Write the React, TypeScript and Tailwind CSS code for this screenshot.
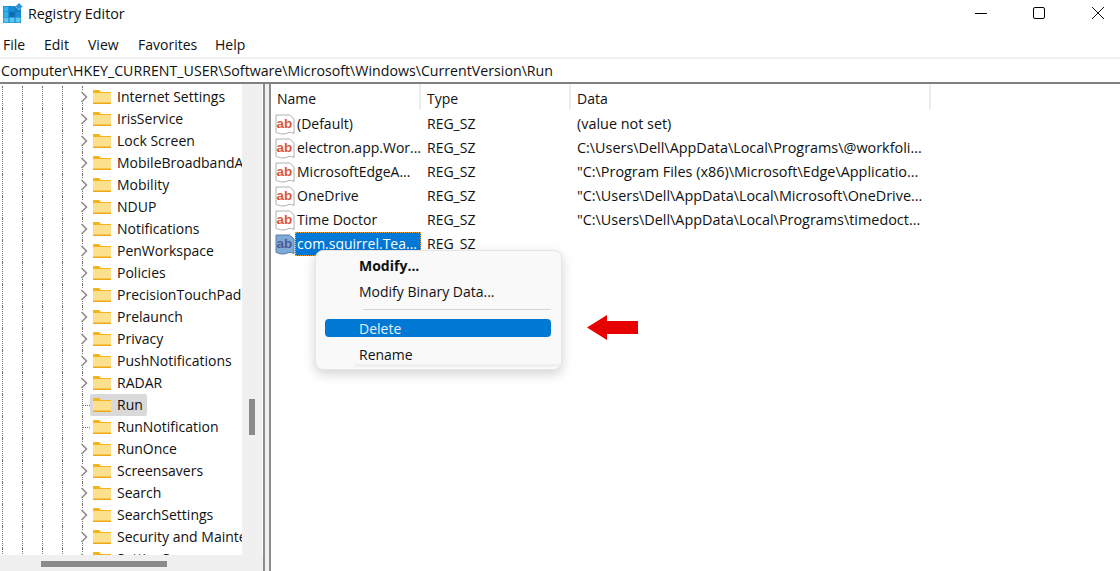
import React from 'react';

const treeItems = [
  { name: 'Internet Settings', arrow: true },
  { name: 'IrisService', arrow: true },
  { name: 'Lock Screen', arrow: true },
  { name: 'MobileBroadbandAccounts', arrow: true },
  { name: 'Mobility', arrow: true },
  { name: 'NDUP', arrow: true },
  { name: 'Notifications', arrow: true },
  { name: 'PenWorkspace', arrow: true },
  { name: 'Policies', arrow: true },
  { name: 'PrecisionTouchPad', arrow: true },
  { name: 'Prelaunch', arrow: true },
  { name: 'Privacy', arrow: true },
  { name: 'PushNotifications', arrow: true },
  { name: 'RADAR', arrow: true },
  { name: 'Run', arrow: false, selected: true },
  { name: 'RunNotification', arrow: false },
  { name: 'RunOnce', arrow: true },
  { name: 'Screensavers', arrow: true },
  { name: 'Search', arrow: true },
  { name: 'SearchSettings', arrow: true },
  { name: 'Security and Maintenance', arrow: true },
  { name: 'SettingSync', arrow: true },
];

const values = [
  { name: '(Default)', data: '(value not set)' },
  { name: 'electron.app.Wor...', data: 'C:\\Users\\Dell\\AppData\\Local\\Programs\\@workfoli...' },
  { name: 'MicrosoftEdgeA...', data: '"C:\\Program Files (x86)\\Microsoft\\Edge\\Applicatio...' },
  { name: 'OneDrive', data: '"C:\\Users\\Dell\\AppData\\Local\\Microsoft\\OneDrive...' },
  { name: 'Time Doctor', data: '"C:\\Users\\Dell\\AppData\\Local\\Programs\\timedoct...' },
  { name: 'com.squirrel.Tea...', data: '', selected: true },
];

function AppIcon() {
  return (
    <svg width="24" height="24" viewBox="0 0 24 24" className="shrink-0">
      <rect x="3" y="6" width="18" height="17" fill="#0f7fc4" />
      <rect x="3.5" y="6.5" width="5" height="5" fill="#35b0ee" />
      <rect x="9.5" y="6.5" width="5" height="5" fill="#1a8dd6" />
      <rect x="3.5" y="12" width="5" height="5" fill="#35b0ee" />
      <rect x="9.5" y="12" width="5" height="5" fill="#0f6cb0" />
      <rect x="15.5" y="12" width="5" height="5" fill="#1a8dd6" />
      <rect x="3.5" y="17.5" width="5" height="5" fill="#5cc6f5" />
      <rect x="9.5" y="17.5" width="5" height="5" fill="#5cc6f5" />
      <rect x="15.5" y="17.5" width="5" height="5" fill="#5cc6f5" />
      <path d="M19 3l3.5 3.5L19 10l-3.5-3.5z" fill="#2b93d6" stroke="#8fcdf0" strokeWidth="0.8" />
    </svg>
  );
}

function Folder() {
  return (
    <svg width="18" height="14" viewBox="0 0 18 14" className="shrink-0">
      <rect x="0" y="2" width="18" height="12" fill="#fbd56f" />
      <rect x="0" y="3" width="18" height="10" fill="#fde08e" />
      <rect x="0" y="12.5" width="18" height="1.5" fill="#eea818" />
      <path d="M0 1a1 1 0 0 1 1-1h5l2 2h10v1H0z" fill="#f5b21b" />
    </svg>
  );
}

function AbIcon({ selected }: { selected?: boolean }) {
  return (
    <svg width="20" height="21" viewBox="0 0 20 21" className="shrink-0">
      <path
        d="M1 1h13.5l4.5 4v14.5c-3-1.6-5-1.2-8 0s-7 0.4-10-1.2z"
        fill={selected ? '#7fa9d6' : '#ffffff'}
        stroke={selected ? '#5a7ea8' : '#b0b0b0'}
        strokeWidth="1"
      />
      <text
        x="9.5"
        y="13.5"
        textAnchor="middle"
        fontFamily='"Liberation Sans", sans-serif'
        fontWeight="700"
        fontSize="13.5"
        fill={selected ? '#4d5c96' : '#e0563a'}
      >
        ab
      </text>
    </svg>
  );
}

function TreeRow({ name, arrow, selected }: { name: string; arrow: boolean; selected?: boolean }) {
  return (
    <div className="flex h-[22px] shrink-0 items-center">
      <div className="h-full w-5 shrink-0 border-l border-dotted border-[#707070]" />
      <div className="h-full w-5 shrink-0 border-l border-dotted border-[#707070]" />
      <div className="h-full w-5 shrink-0 border-l border-dotted border-[#707070]" />
      <div className="h-full w-5 shrink-0 border-l border-dotted border-[#707070]" />
      <div className="flex h-full w-2 shrink-0 items-center justify-start border-l border-dotted border-[#707070]">
        {arrow ? (
          <svg width="8" height="12" viewBox="0 0 8 12" className="-ml-[3px] shrink-0 bg-white">
            <path d="M1.5 1l5 5-5 5" fill="none" stroke="#8a8a8a" strokeWidth="1.5" />
          </svg>
        ) : (
          <div className="w-2 border-t border-dotted border-[#707070]" />
        )}
      </div>
      <div className={`flex h-full shrink-0 items-center gap-[6px] whitespace-nowrap rounded-[2px] pr-[4px] pl-[3px] ${selected ? 'bg-[#d9d9d9]' : ''}`}>
        <Folder />
        <span>{name}</span>
      </div>
    </div>
  );
}

function ValueRow({ name, data, selected }: { name: string; data: string; selected?: boolean }) {
  return (
    <div className="flex h-6 items-center whitespace-nowrap">
      <div className="flex h-full w-[150px] shrink-0 items-center pl-[4px]">
        <AbIcon selected={selected} />
        <span className={`flex h-full w-[126px] shrink-0 items-center pl-[2px] ${selected ? 'border border-dotted border-[#e8a33d] bg-[#0078d7] pl-px text-white' : ''}`}>
          {name}
        </span>
      </div>
      <span className="w-[150px] shrink-0 pl-[6px]">REG_SZ</span>
      <span className="pl-[6px] text-[14.4px]">{data}</span>
    </div>
  );
}

export default function App() {
  return (
    <div
      className="relative flex h-[571px] w-[1120px] flex-col overflow-hidden bg-white text-[14px] leading-none text-[#111]"
      style={{ fontFamily: '"Open Sans", "Noto Sans", sans-serif' }}
    >
      {/* title bar */}
      <div className="flex h-[33px] shrink-0 items-start">
        <AppIcon />
        <span className="mt-[7px] ml-[4px] text-[14.3px]">Registry Editor</span>
        <div className="mt-[7px] ml-auto flex h-3 items-center gap-[46px] pr-4">
          <div className="h-px w-3 bg-black" />
          <div className="h-3 w-3 rounded-[2px] border border-black" />
          <svg width="12" height="12" viewBox="0 0 12 12" className="ml-px">
            <path d="M0 0l12 12M12 0L0 12" stroke="#111" strokeWidth="1" />
          </svg>
        </div>
      </div>

      {/* menu */}
      <div className="flex h-6 shrink-0 items-center pl-[3px]">
        <span className="w-[41px]">File</span>
        <span className="w-11">Edit</span>
        <span className="w-[50px]">View</span>
        <span className="w-[77px]">Favorites</span>
        <span>Help</span>
      </div>
      <div className="h-[2px] shrink-0 bg-[#f0f0f0]" />

      {/* address */}
      <div className="flex h-[25px] shrink-0 items-center border-b-2 border-[#808080] pt-px pl-px text-[14.2px]">
        Computer\HKEY_CURRENT_USER\Software\Microsoft\Windows\CurrentVersion\Run
      </div>

      <div className="flex min-h-0 flex-1">
        {/* tree */}
        <div className="flex w-[263px] shrink-0 flex-col">
          <div className="flex min-h-0 flex-1">
            <div className="flex w-[242px] shrink-0 flex-col overflow-hidden pt-[2px] pl-[2px]">
              {treeItems.map((item) => (
                <TreeRow key={item.name} {...item} />
              ))}
            </div>
            <div className="flex w-5 flex-col items-center bg-[#f0f0f0] pt-[315px]">
              <div className="h-9 w-[6px] bg-[#8a8a8a]" />
            </div>
          </div>
          <div className="h-4 shrink-0 bg-[#f0f0f0] pt-[6px] pl-[41px]">
            <div className="h-[6px] w-[126px] bg-[#8a8a8a]" />
          </div>
        </div>

        {/* splitter */}
        <div className="w-[8px] shrink-0 border-x-2 border-x-[#8c8c8c] bg-[#f0f0f0]" />

        {/* values */}
        <div className="min-w-0 flex-1">
          <div className="flex h-7 whitespace-nowrap">
            <div className="flex h-[26px] w-[150px] items-center border-r-2 border-[#ececec] pt-[3px] pl-[6px]">Name</div>
            <div className="flex h-[26px] w-[150px] items-center border-r-2 border-[#ececec] pt-[3px] pl-[6px]">Type</div>
            <div className="flex h-[26px] w-[360px] items-center border-r-2 border-[#ececec] pt-[3px] pl-[6px]">Data</div>
          </div>
          {values.map((row) => (
            <ValueRow key={row.name} {...row} />
          ))}
        </div>
      </div>

      {/* context menu */}
      <div className="absolute top-[250px] left-[315px] h-[120px] w-[247px] overflow-hidden rounded-lg border border-[#e6e6e6] bg-[#f9f9f9] shadow-[0_4px_12px_rgba(0,0,0,0.18)]">
        <div className="flex h-[30px] items-center pl-[43px] font-bold">Modify...</div>
        <div className="flex h-[21px] items-center pl-[43px]">Modify Binary Data...</div>
        <div className="mt-[7px] mr-[10px] ml-[47px] h-px bg-[#d4d4d4]" />
        <div className="mt-[9px] mr-[10px] ml-[9px] flex h-[18px] items-center rounded-[4px] bg-[#0078d4] pt-px pl-[34px] text-[#e6f1fa]">Delete</div>
        <div className="flex h-[26px] items-center pt-[10px] pl-[43px]">Rename</div>
        <div className="mt-px ml-[39px] h-[3px] bg-[#f0f0f0]" />
      </div>

      {/* red arrow */}
      <svg width="51" height="26" viewBox="0 0 51 26" className="absolute top-[315px] left-[587px]">
        <path d="M0 12.5L20 0v6h31v13H20v6z" fill="#e60000" />
      </svg>
    </div>
  );
}
